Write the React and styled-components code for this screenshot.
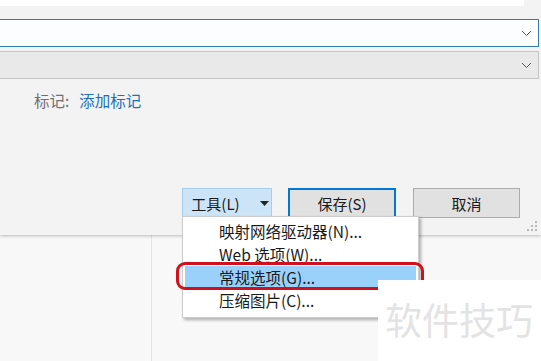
import styled, { createGlobalStyle } from 'styled-components'

const Global = createGlobalStyle`
    html, body {
        margin:0;
        padding:0;
        background:#f8f8f8;
        overflow:hidden;
    }
    body {
        font-family:"Noto Sans CJK SC","Noto Sans",sans-serif;
        color:#1a1a1a;
    }
`

const Page = styled.div`
    position:relative;
    width:541px;
    height:361px;
    display:flex;
    flex-direction:column;
    overflow:hidden;
`

const Dialog = styled.section`
    position:relative;
    z-index:1;
    height:235px;
    flex-shrink:0;
    display:flex;
    flex-direction:column;
    background:#f3f3f3;
    box-shadow:0 1px 3px rgba(0,0,0,.25);
`

const TopStrip = styled.div`
    width:524px;
    height:6px;
    background:#fff;
`

const Combo = styled.div`
    box-sizing:border-box;
    display:flex;
    align-items:center;
    justify-content:flex-end;
    margin:${p => p.$first ? '13px' : '4px'} 0 0 -2px;
    width:541px;
    height:28px;
    padding-right:6px;
    background:${p => p.$first ? '#fbfdfe' : '#e9e9e9'};
    border:1px solid ${p => p.$first ? '#2e7ea6' : '#c4c4c4'};
`

const TagRow = styled.div`
    display:flex;
    gap:10px;
    margin-top:10px;
    padding-left:34px;
    font-size:15.5px;
    line-height:22px;
    color:#707070;

    .link {
        color:#1e6fb8;
    }
`

const ButtonRow = styled.div`
    display:flex;
    margin-top:auto;
    margin-bottom:17px;
    padding-left:182px;
`

const Button = styled.div`
    box-sizing:border-box;
    display:flex;
    align-items:center;
    justify-content:center;
    gap:20px;
    width:${p => p.$w}px;
    height:30px;
    margin-right:${p => p.$gap || 0}px;
    padding-left:${p => p.$tool ? 6 : 0}px;
    font-size:15px;
    background:${p => p.$tool ? '#cce4f7' : '#e1e1e1'};
    border:${p => p.$primary ? '2px solid #0078d7' : p.$tool ? '1px solid #a6cdea' : '1px solid #adadad'};
`

const Grip = styled.svg`
    position:absolute;
    right:3px;
    bottom:3px;
`

const Lower = styled.div`
    flex:1;
    display:flex;
`

const SideColumn = styled.div`
    width:151px;
    border-right:1px solid #e4e4e4;
`

const Menu = styled.ul`
    position:absolute;
    z-index:2;
    left:182px;
    top:216px;
    box-sizing:border-box;
    width:237px;
    height:102px;
    margin:0;
    padding:3px 2px;
    list-style:none;
    background:#fff;
    border:1px solid #cccccc;
    box-shadow:2px 2px 3px rgba(0,0,0,.3);
`

const MenuItem = styled.li`
    height:22px;
    margin-bottom:${p => p.$last ? 0 : 1}px;
    padding-left:34px;
    font-size:15.5px;
    line-height:22px;
    background:${p => p.$active ? '#99d1fb' : 'transparent'};
`

const Highlight = styled.div`
    position:absolute;
    z-index:3;
    left:176px;
    top:262px;
    width:248px;
    height:28px;
    box-sizing:border-box;
    border:3px solid #d0101c;
    border-radius:9px;
`

const Watermark = styled.div`
    position:absolute;
    z-index:4;
    left:378px;
    top:280px;
    right:0;
    bottom:0;
    padding:17px 0 0 7px;
    background:#fff;
    font-size:37px;
    line-height:44px;
    color:#e3e3e3;
    white-space:nowrap;
`

function Chevron() {
    return (
        <svg width='11' height='7' viewBox='0 0 11 7'>
            <path d='M1 1 L5.5 5.5 L10 1' fill='none' stroke='#555' strokeWidth='1'/>
        </svg>
    )
}

const dots = [[8, 0], [8, 4], [4, 4], [8, 8], [4, 8], [0, 8]]

export default function App() {
    return (
        <>
            <Global/>
            <Page>
                <Dialog>
                    <TopStrip/>
                    <Combo $first><Chevron/></Combo>
                    <Combo><Chevron/></Combo>
                    <TagRow>
                        <span>标记:</span>
                        <span className='link'>添加标记</span>
                    </TagRow>
                    <ButtonRow>
                        <Button $tool $w={90} $gap={16}>
                            <span>工具(L)</span>
                            <svg width='9' height='5' viewBox='0 0 9 5'><path d='M0 0 H9 L4.5 5 Z' fill='#222'/></svg>
                        </Button>
                        <Button $primary $w={108} $gap={17}>保存(S)</Button>
                        <Button $w={107}>取消</Button>
                    </ButtonRow>
                    <Grip width='11' height='11' viewBox='0 0 11 11'>
                        {dots.map(([x, y]) => <rect key={x + '-' + y} x={x} y={y} width='2' height='2' fill='#b8b8b8'/>)}
                    </Grip>
                </Dialog>
                <Lower>
                    <SideColumn/>
                </Lower>
                <Menu>
                    <MenuItem>映射网络驱动器(N)...</MenuItem>
                    <MenuItem>Web 选项(W)...</MenuItem>
                    <MenuItem $active>常规选项(G)...</MenuItem>
                    <MenuItem $last>压缩图片(C)...</MenuItem>
                </Menu>
                <Highlight/>
                <Watermark>软件技巧</Watermark>
            </Page>
        </>
    )
}
